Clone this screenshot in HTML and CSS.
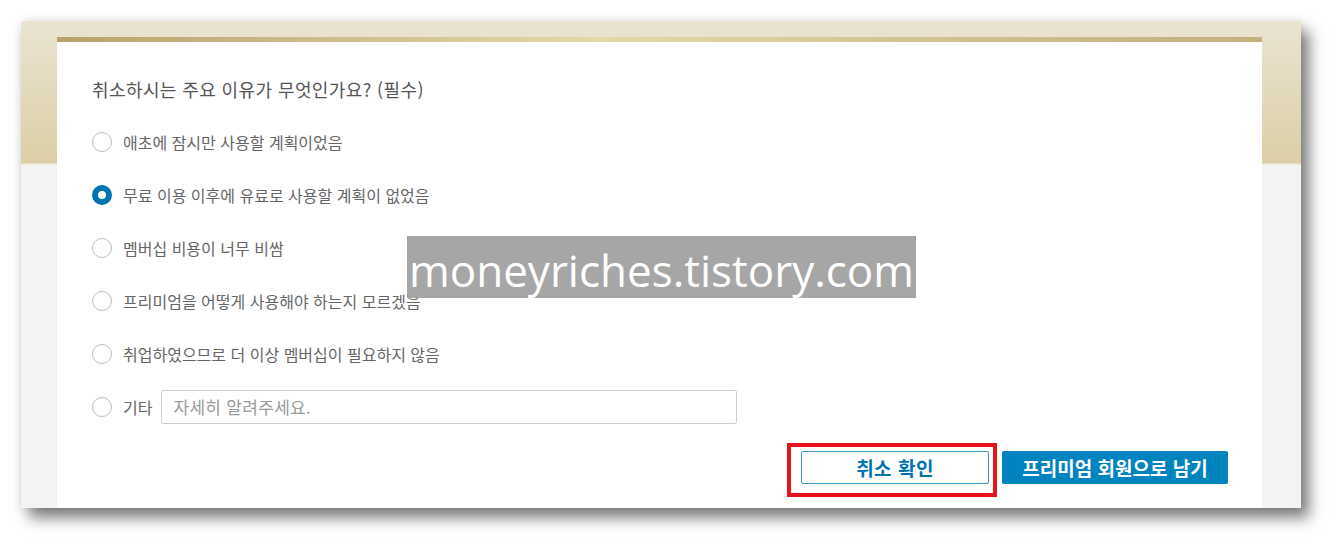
FILE: index.html
```html
<!DOCTYPE html>
<html lang="ko">
<head>
    <meta charset="UTF-8">
    <title>멤버십 취소</title>
    <link rel="stylesheet" href="styles.css">
</head>
<body>

<div class="shot">
    <div class="cancel-card">
        <p class="question">취소하시는 주요 이유가 무엇인가요? (필수)</p>

        <!-- reasons -->
        <ul class="reasons">
            <li class="reason"><span class="radio"></span>애초에 잠시만 사용할 계획이었음</li>
            <li class="reason"><span class="radio checked"></span>무료 이용 이후에 유료로 사용할 계획이 없었음</li>
            <li class="reason"><span class="radio"></span>멤버십 비용이 너무 비쌈</li>
            <li class="reason"><span class="radio"></span>프리미엄을 어떻게 사용해야 하는지 모르겠음</li>
            <li class="reason"><span class="radio"></span>취업하였으므로 더 이상 멤버십이 필요하지 않음</li>
            <li class="reason"><span class="radio"></span>기타
                <input type="text" class="other-input" placeholder="자세히 알려주세요.">
            </li>
        </ul>

        <div class="actions">
            <span class="highlight">
                <button class="btn btn-outline">취소 확인</button>
            </span>
            <button class="btn btn-primary">프리미엄 회원으로 남기</button>
        </div>
    </div>
</div>

<!-- watermark -->
<div class="watermark">moneyriches.tistory.com</div>

</body>
</html>
```

FILE: styles.css
```css
body {
    margin: 0px;
    padding: 21px 0 42px 21px;
    min-height: 550px;
    box-sizing: border-box;
    background-color: #ffffff;
    font-family: "Noto Sans CJK KR", "Noto Sans", sans-serif;
}
.shot {
    width: 1280px;
    height: 487px;
    background: linear-gradient(#eae4d3 0px, #e3d9bc 70px, #dccfa6 142px, #efe9d6 143px, #f3f3f3 144px);
    box-shadow: 0 0 10px rgba(0, 0, 0, 0.1), 8px 10px 14px rgba(0, 0, 0, 0.5);
    padding: 16px 0 0 36px;
    box-sizing: border-box;
}
.cancel-card {
    width: 1205px;
    height: 471px;
    box-sizing: border-box;
    background-color: white;
    border-top: 5px solid #c9b885;
    border-image: linear-gradient(to right, #b7a26b, #e4d7aa 45%, #cfc08e 75%, #c3b07d) 1;
    border-left: 1px solid #dcdcdc;
    border-right: 1px solid #dcdcdc;
    border-bottom: 0;
    border-image-width: 5px 0 0 0;
    padding: 20px 33px 0 34px;
    display: flex;
    flex-direction: column;
}
.question {
    margin: 0;
    height: 53px;
    display: flex;
    align-items: center;
    font-size: 18px;
    letter-spacing: 0.4px;
    color: #555;
}
.reasons {
    list-style: none;
    margin: 0;
    padding: 0;
}
.reason {
    height: 53px;
    display: flex;
    align-items: center;
    font-size: 16px;
    color: #666;
}
.radio {
    width: 20px;
    height: 20px;
    border: 1px solid #bdbdbd;
    border-radius: 50%;
    box-sizing: border-box;
    margin-right: 11px;
    flex-shrink: 0;
}
.radio.checked {
    border: 6px solid #0073b1;
}
.other-input {
    margin-left: 9px;
    width: 576px;
    height: 34px;
    box-sizing: border-box;
    border: 1px solid #cfcfcf;
    border-radius: 2px;
    padding: 0 11px;
    font-family: "Noto Sans CJK KR", sans-serif;
    font-size: 17px;
    letter-spacing: 0.3px;
    color: #555;
}
.other-input::placeholder {
    color: #9a9a9a;
}
.actions {
    display: flex;
    justify-content: flex-end;
    gap: 13px;
    margin-top: 18px;
}
.highlight {
    position: relative;
    display: flex;
}
/* red annotation box */
.highlight::after {
    content: "";
    position: absolute;
    top: -8px;
    left: -14px;
    right: -8px;
    bottom: -13px;
    border: 4px solid #e8141b;
}
.btn {
    height: 33px;
    border-radius: 2px;
    font-family: "Noto Sans CJK KR", sans-serif;
    font-size: 19px;
    font-weight: bold;
    padding: 0;
    cursor: pointer;
}
.btn-outline {
    width: 188px;
    background-color: white;
    border: 1px solid #3b95c7;
    color: #0073b1;
    letter-spacing: 0.5px;
}
.btn-primary {
    width: 226px;
    background-color: #0084bf;
    border: none;
    color: white;
}
.watermark {
    position: absolute;
    left: 407px;
    top: 236px;
    width: 509px;
    height: 62px;
    background-color: #a6a6a6;
    color: white;
    font-family: "Open Sans", sans-serif;
    font-size: 44px;
    line-height: 68px;
    white-space: nowrap;
    text-align: center;
}
```
